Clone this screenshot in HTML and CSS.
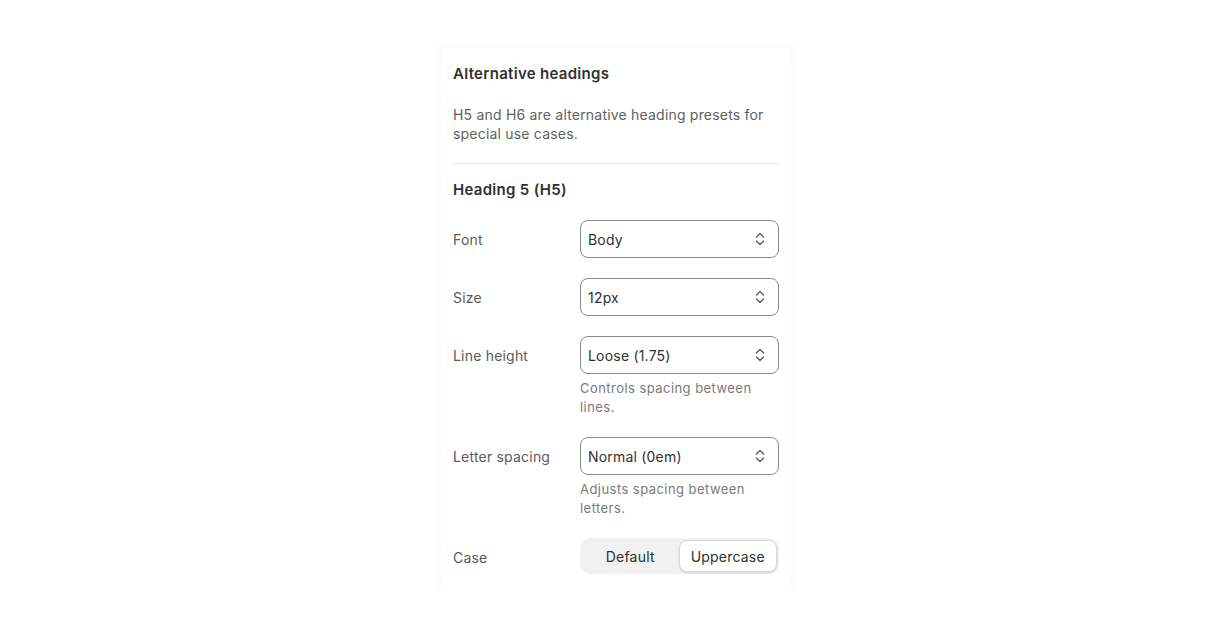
FILE: index.html
```html
<!DOCTYPE html>
<html lang="en">

<head>
  <meta charset="UTF-8">
  <meta name="viewport" content="width=device-width, initial-scale=1.0">
  <title>Alternative headings</title>
  <link rel="stylesheet" href="styles.css">
</head>

<body>
  <div class="card">
    <div class="card-title">Alternative headings</div>
    <p class="card-desc">H5 and H6 are alternative heading presets for special use cases.</p>
    <div class="divider"></div>

    <div class="section-title">Heading 5 (H5)</div>

    <div class="fields">
      <div class="field">
        <div class="field-label">Font</div>
        <div class="field-control">
          <div class="select">
            <span>Body</span>
            <svg class="chevron" width="12" height="16" viewBox="0 0 12 16"><path d="M2.5 6 6 2.5 9.5 6M2.5 10 6 13.5 9.5 10" /></svg>
          </div>
        </div>
      </div>

      <div class="field">
        <div class="field-label">Size</div>
        <div class="field-control">
          <div class="select">
            <span>12px</span>
            <svg class="chevron" width="12" height="16" viewBox="0 0 12 16"><path d="M2.5 6 6 2.5 9.5 6M2.5 10 6 13.5 9.5 10" /></svg>
          </div>
        </div>
      </div>

      <div class="field">
        <div class="field-label">Line height</div>
        <div class="field-control">
          <div class="select">
            <span>Loose (1.75)</span>
            <svg class="chevron" width="12" height="16" viewBox="0 0 12 16"><path d="M2.5 6 6 2.5 9.5 6M2.5 10 6 13.5 9.5 10" /></svg>
          </div>
          <div class="help">Controls spacing between lines.</div>
        </div>
      </div>

      <div class="field">
        <div class="field-label">Letter spacing</div>
        <div class="field-control">
          <div class="select">
            <span>Normal (0em)</span>
            <svg class="chevron" width="12" height="16" viewBox="0 0 12 16"><path d="M2.5 6 6 2.5 9.5 6M2.5 10 6 13.5 9.5 10" /></svg>
          </div>
          <div class="help">Adjusts spacing between letters.</div>
        </div>
      </div>

      <div class="field">
        <div class="field-label">Case</div>
        <div class="field-control">
          <div class="segmented">
            <div class="segment">Default</div>
            <div class="segment active">Uppercase</div>
          </div>
        </div>
      </div>
    </div>
  </div>
</body>

</html>
```

FILE: styles.css
```css
* {
  margin: 0;
  padding: 0;
  box-sizing: border-box;
}

body {
  background: #ffffff;
  font-family: Inter, "Noto Sans", sans-serif;
  color: #303030;
  letter-spacing: 0.2px;
  padding-top: 48px;
}

.card {
  width: 350px;
  margin: 0 auto;
  padding: 16px 12px 14px;
  background: #ffffff;
  border-radius: 4px;
  box-shadow: 0 0 14px rgba(0, 0, 0, 0.045);
}

.card-title {
  font-size: 15px;
  font-weight: 600;
  line-height: 20px;
  letter-spacing: 0.3px;
}

.card-desc {
  margin-top: 21px;
  font-size: 14px;
  line-height: 19px;
  color: #616161;
}

.divider {
  height: 1px;
  background: #ebebeb;
  margin: 20px 0 16px;
}

.section-title {
  font-size: 15px;
  font-weight: 600;
  line-height: 20px;
  letter-spacing: 0.3px;
}

.fields {
  margin-top: 20px;
  display: flex;
  flex-direction: column;
  gap: 20px;
}

.field {
  display: grid;
  grid-template-columns: 115px 1fr;
  column-gap: 12px;
}

.field-label {
  height: 38px;
  display: flex;
  align-items: center;
  font-size: 14px;
  color: #5a5a5a;
}

.select {
  height: 38px;
  border: 1px solid #8a8a8a;
  border-radius: 8px;
  padding: 0 12px 0 7px;
  display: flex;
  align-items: center;
  justify-content: space-between;
  font-size: 14px;
  color: #303030;
}

.chevron path {
  fill: none;
  stroke: #5c5c5c;
  stroke-width: 1.4;
  stroke-linecap: round;
  stroke-linejoin: round;
}

.help {
  margin-top: 5px;
  font-size: 13px;
  line-height: 19px;
  letter-spacing: 0.45px;
  color: #7a7a7a;
}

.segmented {
  height: 36px;
  background: #f1f1f1;
  border-radius: 10px;
  padding: 2px;
  display: flex;
}

.segment {
  flex: 1;
  display: flex;
  align-items: center;
  justify-content: center;
  font-size: 14px;
  color: #303030;
  border-radius: 8px;
}

.segment.active {
  background: #ffffff;
  border: 1px solid #d8d8d8;
  box-shadow: 0 1px 2px rgba(0, 0, 0, 0.12);
}
```
